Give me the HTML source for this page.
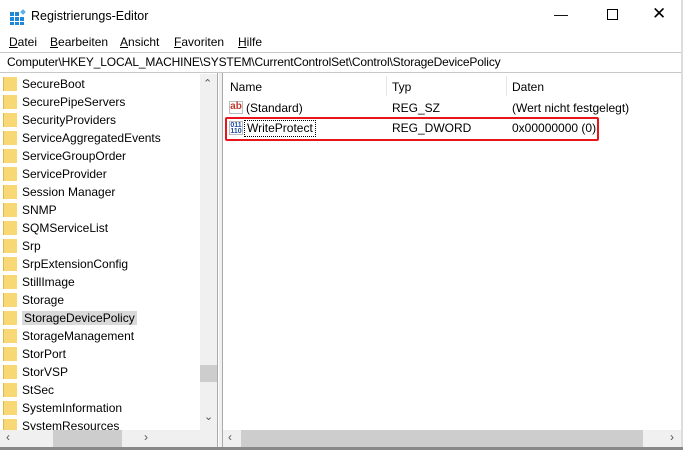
<!DOCTYPE html>
<html><head><style>
*{margin:0;padding:0;box-sizing:border-box}
body{width:683px;height:450px;overflow:hidden;background:#fff;font-family:"Liberation Sans",sans-serif;font-size:12px;color:#000;position:relative}
.a{position:absolute}
.tree div{height:18px;line-height:18px;position:relative;padding-left:22px;white-space:nowrap}
.tree div:before{content:"";position:absolute;left:3px;top:2px;width:13px;height:14px;background:#f8d775;border-left:1px solid #e0b850}
</style></head><body>
<svg class="a" style="left:10px;top:9px" width="16" height="16"><rect x="0" y="3" width="4" height="4" fill="#1e88d6"/><rect x="5" y="3" width="4" height="4" fill="#1e88d6"/><rect x="0" y="8" width="4" height="4" fill="#1e88d6"/><rect x="5" y="8" width="4" height="4" fill="#1e88d6"/><rect x="10" y="8" width="4" height="4" fill="#1e88d6"/><rect x="0" y="13" width="4" height="3" fill="#1e88d6"/><rect x="5" y="13" width="4" height="3" fill="#1e88d6"/><rect x="10" y="13" width="4" height="3" fill="#1e88d6"/><rect x="11" y="1" width="4" height="4" fill="#5fb0ea" transform="rotate(45 13 3)"/></svg>
<div class="a" style="left:31px;top:9px;font-size:12.5px">Registrierungs-Editor</div>
<div class="a" style="left:554px;top:6px;font-size:14px">&#8212;</div>
<div class="a" style="left:607px;top:9px;width:11px;height:11px;border:1px solid #000"></div>
<div class="a" style="left:652px;top:4px;font-size:17px">&#10005;</div>
<div class="a" style="left:9px;top:35px"><u>D</u>atei</div>
<div class="a" style="left:50px;top:35px"><u>B</u>earbeiten</div>
<div class="a" style="left:120px;top:35px"><u>A</u>nsicht</div>
<div class="a" style="left:174px;top:35px"><u>F</u>avoriten</div>
<div class="a" style="left:238px;top:35px"><u>H</u>ilfe</div>
<div class="a" style="left:0;top:52px;width:683px;height:21px;border:1px solid #c8c8c8;border-left:none;border-right:none"></div>
<div class="a" style="left:7px;top:55px;letter-spacing:-0.15px">Computer\HKEY_LOCAL_MACHINE\SYSTEM\CurrentControlSet\Control\StorageDevicePolicy</div>
<div class="a" style="left:0;top:73px;width:218px;height:377px;border-right:1px solid #aaa"></div>
<div class="a tree" style="left:0;top:75px;width:200px;height:355px;overflow:hidden">
<div>SecureBoot</div><div>SecurePipeServers</div><div>SecurityProviders</div><div>ServiceAggregatedEvents</div><div>ServiceGroupOrder</div><div>ServiceProvider</div><div>Session Manager</div><div>SNMP</div><div>SQMServiceList</div><div>Srp</div><div>SrpExtensionConfig</div><div>StillImage</div><div>Storage</div><div><span style="background:#d9d9d9;padding:0 2px">StorageDevicePolicy</span></div><div>StorageManagement</div><div>StorPort</div><div>StorVSP</div><div>StSec</div><div>SystemInformation</div><div>SystemResources</div>
</div>
<div class="a" style="left:200px;top:74px;width:17px;height:356px;background:#f0f0f0"></div>
<div class="a" style="left:203px;top:77px;font-size:11px;color:#555">&#8963;</div>
<div class="a" style="left:200px;top:365px;width:17px;height:17px;background:#cdcdcd"></div>
<div class="a" style="left:204px;top:410px;font-size:11px;color:#555">&#8964;</div>
<div class="a" style="left:0;top:430px;width:217px;height:17px;background:#f0f0f0"></div>
<div class="a" style="left:53px;top:430px;width:69px;height:17px;background:#cdcdcd"></div>
<div class="a" style="left:6px;top:430px;color:#555">&#8249;</div>
<div class="a" style="left:144px;top:430px;color:#555">&#8250;</div>
<div class="a" style="left:219px;top:73px;width:3px;height:377px;background:#f0f0f0"></div>
<div class="a" style="left:222px;top:73px;width:1px;height:377px;background:#aaa"></div>
<div class="a" style="left:230px;top:80px">Name</div>
<div class="a" style="left:386px;top:76px;width:1px;height:20px;background:#e5e5e5"></div>
<div class="a" style="left:392px;top:80px">Typ</div>
<div class="a" style="left:506px;top:76px;width:1px;height:20px;background:#e5e5e5"></div>
<div class="a" style="left:512px;top:80px">Daten</div>
<div class="a" style="left:229px;top:101px;width:14px;height:13px;border:1px solid #bbb;color:#c0392b;font-weight:bold;font-size:10px;line-height:10px;text-align:center">ab</div>
<div class="a" style="left:246px;top:101px">(Standard)</div>
<div class="a" style="left:392px;top:101px">REG_SZ</div>
<div class="a" style="left:512px;top:101px">(Wert nicht festgelegt)</div>
<div class="a" style="left:229px;top:121px;width:14px;height:14px;border:1px solid #bbb;color:#1a4fa0;font-weight:bold;font-size:7px;line-height:6px;text-align:center;padding-top:1px">011<br>110</div>
<div class="a" style="left:244px;top:120px;border:1px dotted #000;padding:0 2px;height:17px;line-height:15px">WriteProtect</div>
<div class="a" style="left:392px;top:121px">REG_DWORD</div>
<div class="a" style="left:512px;top:121px">0x00000000 (0)</div>
<div class="a" style="left:225px;top:117px;width:374px;height:24px;border:2px solid #e8161b;border-radius:2px"></div>
<div class="a" style="left:223px;top:430px;width:460px;height:17px;background:#f0f0f0"></div>
<div class="a" style="left:241px;top:430px;width:402px;height:17px;background:#cdcdcd"></div>
<div class="a" style="left:228px;top:430px;color:#555">&#8249;</div>
<div class="a" style="left:670px;top:430px;color:#555">&#8250;</div>
<div class="a" style="left:681px;top:0;width:2px;height:450px;background:#ddd"></div>
<div class="a" style="left:0;top:447px;width:683px;height:3px;background:#888"></div>
</body></html>
